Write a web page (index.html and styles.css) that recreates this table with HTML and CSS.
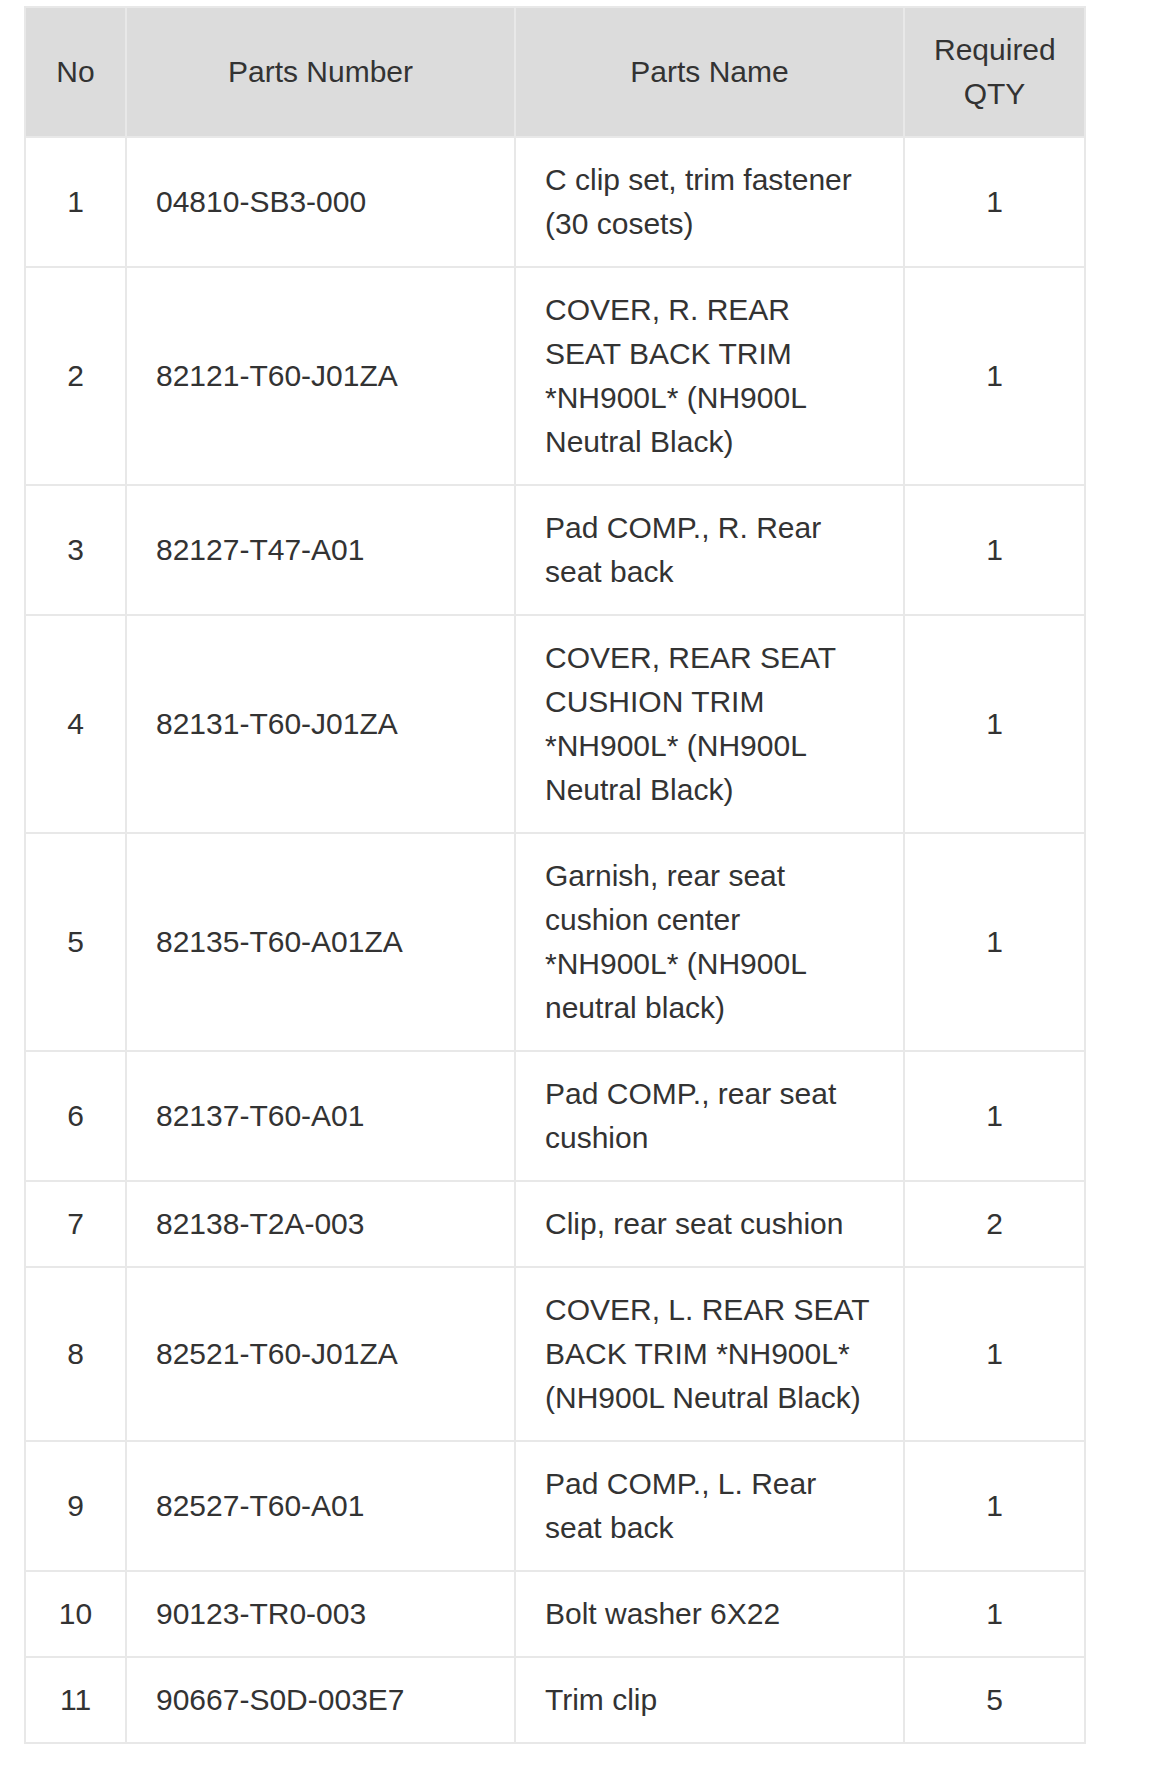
FILE: index.html
```html
<!DOCTYPE html>
<html lang="en">
<head>
  <meta charset="UTF-8" />
  <meta name="viewport" content="width=device-width, initial-scale=1.0"/>
  <title>Rear Seat Parts List</title>
  <link rel="stylesheet" href="styles.css">
</head>
<body>

  <table class="parts">
    <colgroup>
      <col class="col-no">
      <col class="col-number">
      <col class="col-name">
      <col class="col-qty">
    </colgroup>
    <thead>
      <tr>
        <th>No</th>
        <th>Parts Number</th>
        <th>Parts Name</th>
        <th>Required QTY</th>
      </tr>
    </thead>
    <tbody>
      <tr>
        <td class="no">1</td>
        <td>04810-SB3-000</td>
        <td>C clip set, trim fastener (30 cosets)</td>
        <td class="qty">1</td>
      </tr>
      <tr>
        <td class="no">2</td>
        <td>82121-T60-J01ZA</td>
        <td>COVER, R. REAR SEAT BACK TRIM *NH900L* (NH900L Neutral Black)</td>
        <td class="qty">1</td>
      </tr>
      <tr>
        <td class="no">3</td>
        <td>82127-T47-A01</td>
        <td>Pad COMP., R. Rear seat back</td>
        <td class="qty">1</td>
      </tr>
      <tr>
        <td class="no">4</td>
        <td>82131-T60-J01ZA</td>
        <td>COVER, REAR SEAT CUSHION TRIM *NH900L* (NH900L Neutral Black)</td>
        <td class="qty">1</td>
      </tr>
      <tr>
        <td class="no">5</td>
        <td>82135-T60-A01ZA</td>
        <td>Garnish, rear seat cushion center *NH900L* (NH900L neutral black)</td>
        <td class="qty">1</td>
      </tr>
      <tr>
        <td class="no">6</td>
        <td>82137-T60-A01</td>
        <td>Pad COMP., rear seat cushion</td>
        <td class="qty">1</td>
      </tr>
      <tr>
        <td class="no">7</td>
        <td>82138-T2A-003</td>
        <td>Clip, rear seat cushion</td>
        <td class="qty">2</td>
      </tr>
      <tr>
        <td class="no">8</td>
        <td>82521-T60-J01ZA</td>
        <td>COVER, L. REAR SEAT BACK TRIM *NH900L* (NH900L Neutral Black)</td>
        <td class="qty">1</td>
      </tr>
      <tr>
        <td class="no">9</td>
        <td>82527-T60-A01</td>
        <td>Pad COMP., L. Rear seat back</td>
        <td class="qty">1</td>
      </tr>
      <tr>
        <td class="no">10</td>
        <td>90123-TR0-003</td>
        <td>Bolt washer 6X22</td>
        <td class="qty">1</td>
      </tr>
      <tr>
        <td class="no">11</td>
        <td>90667-S0D-003E7</td>
        <td>Trim clip</td>
        <td class="qty">5</td>
      </tr>
    </tbody>
  </table>

</body>
</html>
```

FILE: styles.css
```css
body {
  font-family: 'Liberation Sans', Arial, Helvetica, sans-serif;
  background-color: #ffffff;
  margin: 0;
  padding: 6px 24px;
  color: #333333;
}

.parts {
  width: 1060px;
  table-layout: fixed;
  border-collapse: collapse;
  border: 2px solid #e8e8e8;
  font-size: 30px;
  line-height: 44px;
}

.col-no { width: 101px; }
.col-number { width: 389px; }
.col-name { width: 389px; }
.col-qty { width: 181px; }

.parts th,
.parts td {
  border: 2px solid #e8e8e8;
  padding: 20px 29px;
  vertical-align: middle;
  text-align: left;
}

.parts th {
  background-color: #dcdcdc;
  font-weight: normal;
  text-align: center;
}

.parts td.no,
.parts td.qty {
  text-align: center;
  padding-left: 10px;
  padding-right: 10px;
}
```
